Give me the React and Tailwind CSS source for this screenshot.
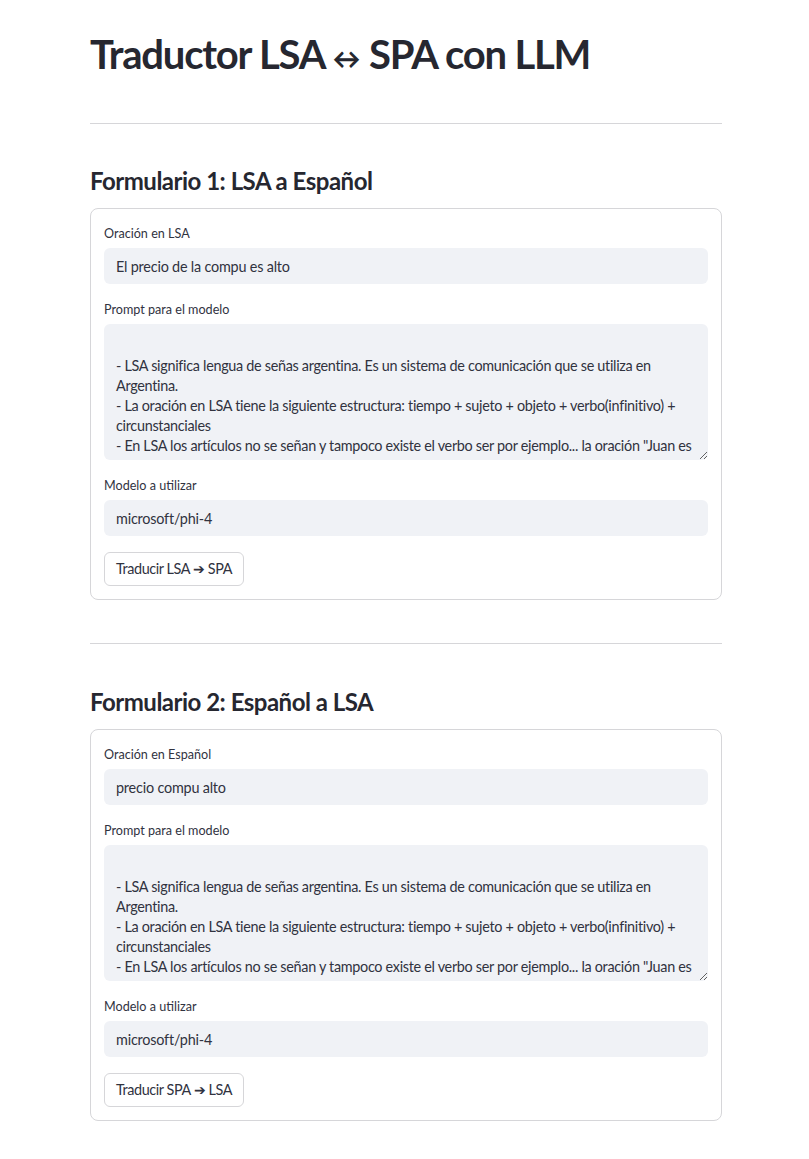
import { useState } from 'react';

const PROMPT = `
- LSA significa lengua de señas argentina. Es un sistema de comunicación que se utiliza en Argentina.
- La oración en LSA tiene la siguiente estructura: tiempo + sujeto + objeto + verbo(infinitivo) + circunstanciales
- En LSA los artículos no se señan y tampoco existe el verbo ser por ejemplo... la oración "Juan es alto" en LSA se dice "Juan alto".
- Los verbos se señan en infinitivo.
`;

function Field({ label, children }) {
  return (
    <div>
      <div className="h-5 leading-5 text-[12.6px] text-[#31333f] mb-1">{label}</div>
      {children}
    </div>
  );
}

function TextInput({ value, onChange }) {
  return (
    <input
      value={value}
      onChange={(e) => onChange(e.target.value)}
      className="block w-full h-9 rounded-md bg-[#f0f2f6] px-3 text-[14.4px] tracking-[-0.2px] text-[#31333f] outline-none"
    />
  );
}

function Form({ title, inputLabel, defaultText, button }) {
  const [text, setText] = useState(defaultText);
  const [prompt, setPrompt] = useState(PROMPT);
  const [model, setModel] = useState('microsoft/phi-4');

  return (
    <section>
      <h3 className="text-[24px] font-bold leading-[36px] tracking-[-0.5px] text-[#262730] mb-[9px]">
        {title}
      </h3>
      <div className="border border-[#d6d6d9] rounded-lg px-[13px] pt-[15px] pb-[13px] flex flex-col gap-4">
        <Field label={inputLabel}>
          <TextInput value={text} onChange={setText} />
        </Field>
        <Field label="Prompt para el modelo">
          <textarea
            value={prompt}
            onChange={(e) => setPrompt(e.target.value)}
            className="block w-full h-[136px] rounded-md bg-[#f0f2f6] px-3 py-3 text-[14.4px] leading-5 tracking-[-0.3px] text-[#31333f] outline-none overflow-hidden resize-y"
          />
        </Field>
        <Field label="Modelo a utilizar">
          <TextInput value={model} onChange={setModel} />
        </Field>
        <div>
          <button className="h-[34px] px-[11px] rounded-md border border-[#d6d6d9] bg-white text-[14.4px] tracking-[-0.4px] text-[#31333f]">
            {button}
          </button>
        </div>
      </div>
    </section>
  );
}

export default function App() {
  return (
    <div
      className="min-h-screen bg-white"
      style={{ fontFamily: '"Source Sans Pro", Lato, "Noto Sans", sans-serif' }}
    >
      <div className="ml-[90px] w-[632px] pt-[26px] pb-10">
        <h1 className="text-[40px] font-bold leading-[56px] text-[#262730] tracking-[-1.2px]">
          Traductor LSA <span className="text-[28px] tracking-normal">↔</span> SPA con LLM
        </h1>
        <hr className="mt-[37px] mb-[39px] border-[#d6d6d9]" />
        <Form
          title="Formulario 1: LSA a Español"
          inputLabel="Oración en LSA"
          defaultText="El precio de la compu es alto"
          button="Traducir LSA ➔ SPA"
        />
        <hr className="mt-[43px] mb-[40px] border-[#d6d6d9]" />
        <Form
          title="Formulario 2: Español a LSA"
          inputLabel="Oración en Español"
          defaultText="precio compu alto"
          button="Traducir SPA ➔ LSA"
        />
      </div>
    </div>
  );
}
